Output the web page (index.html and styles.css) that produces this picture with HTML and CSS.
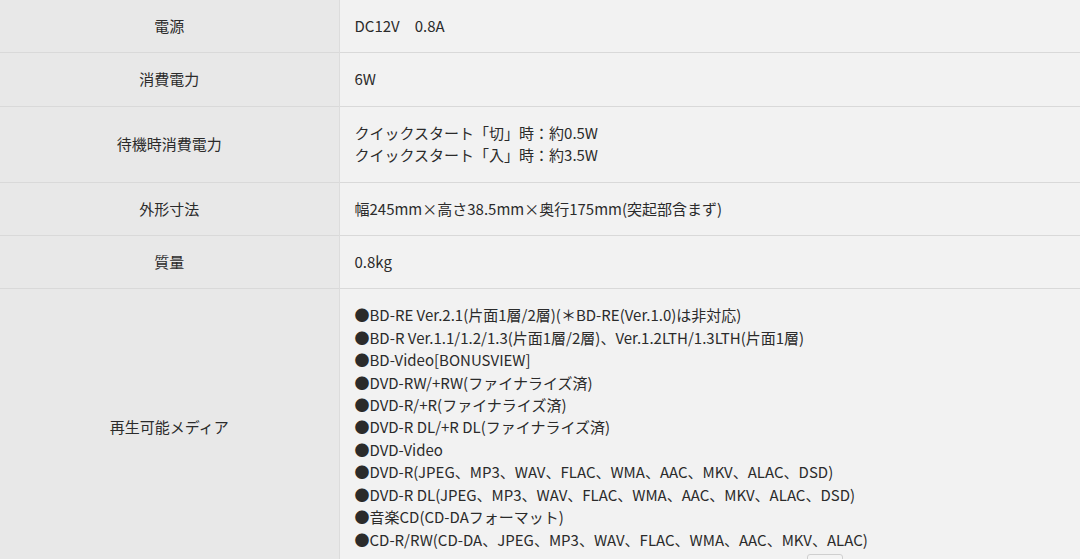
FILE: index.html
```html
<!DOCTYPE html>
<html lang="ja">
<head>
    <meta charset="UTF-8">
    <title>仕様</title>
    <link rel="stylesheet" href="styles.css">
</head>
<body>

    <table class="spec">
        <tr>
            <th>電源</th>
            <td>DC12V　0.8A</td>
        </tr>
        <tr>
            <th>消費電力</th>
            <td>6W</td>
        </tr>
        <tr>
            <th>待機時消費電力</th>
            <td>クイックスタート「切」時：約0.5W<br>クイックスタート「入」時：約3.5W</td>
        </tr>
        <tr>
            <th>外形寸法</th>
            <td>幅245mm×高さ38.5mm×奥行175mm(突起部含まず)</td>
        </tr>
        <tr>
            <th>質量</th>
            <td>0.8kg</td>
        </tr>
        <tr>
            <th>再生可能メディア</th>
            <td>
                ●BD-RE Ver.2.1(片面1層/2層)(＊BD-RE(Ver.1.0)は非対応)<br>
                ●BD-R Ver.1.1/1.2/1.3(片面1層/2層)、Ver.1.2LTH/1.3LTH(片面1層)<br>
                ●BD-Video[BONUSVIEW]<br>
                ●DVD-RW/+RW(ファイナライズ済)<br>
                ●DVD-R/+R(ファイナライズ済)<br>
                ●DVD-R DL/+R DL(ファイナライズ済)<br>
                ●DVD-Video<br>
                ●DVD-R(JPEG、MP3、WAV、FLAC、WMA、AAC、MKV、ALAC、DSD)<br>
                ●DVD-R DL(JPEG、MP3、WAV、FLAC、WMA、AAC、MKV、ALAC、DSD)<br>
                ●音楽CD(CD-DAフォーマット)<br>
                ●CD-R/RW(CD-DA、JPEG、MP3、WAV、FLAC、WMA、AAC、MKV、ALAC)
            </td>
        </tr>
    </table>

    <div class="pagetop"></div>

</body>
</html>
```

FILE: styles.css
```css
body{ margin: 0; padding: 0; background: #f2f2f2; }

.spec{
    width: 100%;
    border-collapse: collapse;
    font-family: "Noto Sans CJK JP", "Noto Sans", sans-serif;
    font-size: 15px;
    line-height: 22.4px;
    color: #2b2b2b;
}

.spec tr{
    border-bottom: 1px solid #d9d9d9;
    box-shadow: inset 0 -2px 0 #f7f7f7;
}

.spec th{
    width: 339px;
    padding: 15px;
    box-sizing: border-box;
    background: #e8e8e8;
    border-right: 1px solid #dcdcdc;
    font-weight: normal;
    text-align: center;
    vertical-align: middle;
}

.spec td{
    padding: 15px;
    background: #f2f2f2;
    text-align: left;
    vertical-align: middle;
}

.pagetop{
    position: fixed;
    left: 807px;
    top: 554px;
    width: 34px;
    height: 12px;
    border: 1px solid #cfcfcf;
    border-radius: 3px;
    background: #f4f4f4;
}
```
